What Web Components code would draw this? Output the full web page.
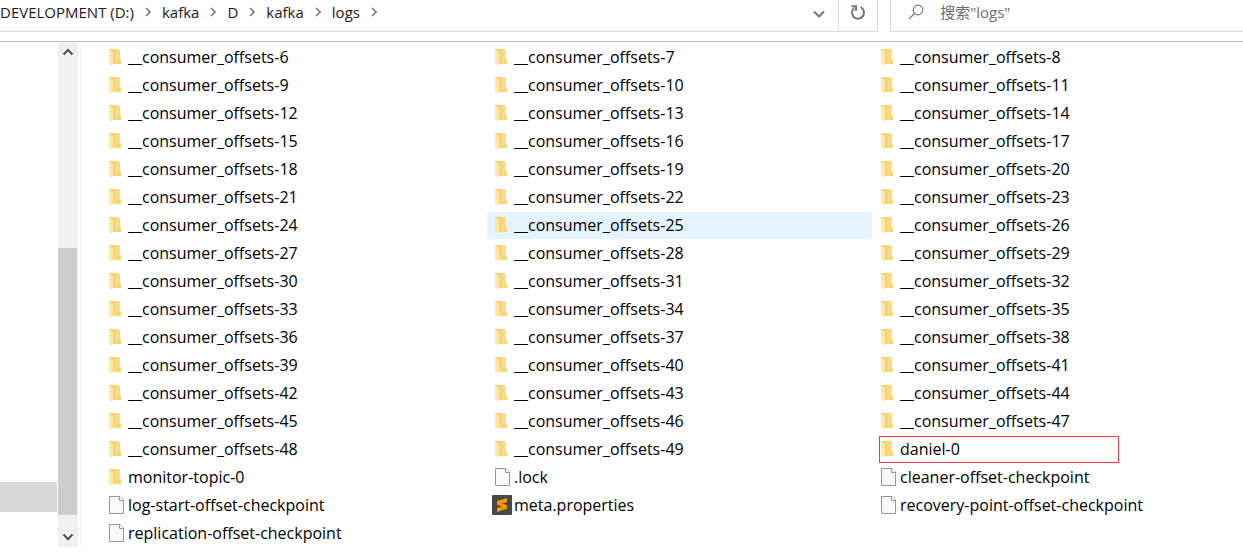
<!DOCTYPE html>
<html lang="zh-CN">
<head>
<meta charset="utf-8">
<title>logs</title>
<style>
  body { margin: 0; background: #fff; color: #000; font: 16px/26px "Open Sans", "Noto Sans CJK SC", sans-serif; }
</style>
</head>
<body>
<file-explorer></file-explorer>

<template id="explorer">
  <style>
    :host { display: block; }
    header { display: flex; gap: 12px; padding-bottom: 9px; border-bottom: 1px solid #bcbfbc; }
    address-bar { flex: 879 1 0; min-width: 0; }
    search-box { flex: 352 1 0; min-width: 0; }
    main { display: flex; }
    nav-pane { width: 58px; }
    scroll-track { width: 20px; }
    file-list { flex: 1; min-width: 0; margin-left: 2px; border-left: 1px solid #f3f3f3; }
  </style>
  <header>
    <address-bar></address-bar>
    <search-box></search-box>
  </header>
  <main>
    <nav-pane></nav-pane>
    <scroll-track></scroll-track>
    <file-list></file-list>
  </main>
</template>

<template id="address">
  <style>
    :host { display: flex; height: 32px; box-sizing: border-box; border-bottom: 1px solid #d9d9d9; font-size: 15px; }
    nav { flex: 1; display: flex; align-items: center; gap: 11px; padding-bottom: 8px; white-space: nowrap; min-width: 0; }
    a { color: #1a1a1a; text-decoration: none; }
    svg { display: block; fill: none; stroke: #777; }
    button { width: 38px; padding: 0 0 4px; border: 0; background: none; display: grid; place-items: center; }
    .refresh { width: 40px; padding-bottom: 6px; border: solid #d9d9d9; border-width: 0 1px; }
  </style>
  <nav aria-label="路径"></nav>
  <button aria-label="历史记录"><svg width="14" height="10" viewBox="0 0 14 10"><path d="M2 2.500l5 5 5-5" stroke-width="2"/></svg></button>
  <button class="refresh" aria-label="刷新"><svg width="16" height="17" viewBox="0 0 16 17"><path d="M10.500 3.200A6 6 0 1 1 4 4.200M1.500 2.200H6V7" stroke-width="2"/></svg></button>
</template>

<template id="search">
  <style>
    :host { display: flex; align-items: center; height: 32px; box-sizing: border-box; border: solid #d9d9d9; border-width: 0 0 1px 1px; }
    label { display: flex; align-items: center; flex: 1; gap: 16px; padding: 0 0 8px 17px; }
    svg { flex: none; display: block; fill: none; stroke: #777; }
    input { flex: 1; min-width: 0; border: 0; padding: 0; outline: 0; background: none; font: inherit; font-size: 15px; height: 25px; }
    input::placeholder { color: #6d6d6d; opacity: 1; }
  </style>
  <label><svg width="16" height="16" viewBox="0 0 16 16"><circle cx="10" cy="6" r="4.8" stroke-width="1.2"/><path d="M6.500 9.500L1 15" stroke-width="1.3"/></svg><input type="text" aria-label="搜索" placeholder='搜索"logs"'></label>
</template>

<template id="navpane">
  <style>
    :host { display: flex; flex-direction: column; justify-content: flex-end; padding-bottom: 35px; box-sizing: border-box; }
    .selected { height: 30px; margin-right: 1px; background: #d9d9d9; }
  </style>
  <div class="selected"></div>
</template>

<template id="scroll">
  <style>
    :host { display: flex; flex-direction: column; background: #f0f0f0; }
    button { height: 20px; padding: 0; border: 0; background: none; display: grid; place-items: center; }
    svg { display: block; fill: none; stroke: #505050; stroke-width: 2; }
    .before { flex: 186; }
    .thumb { flex: 267; margin-right: 1px; background: #cdcdcd; }
    .after { flex: 12; }
  </style>
  <button aria-label="向上"><svg width="12" height="8" viewBox="0 0 12 8"><path d="M1.500 6.500L6 2l4.500 4.500"/></svg></button>
  <div class="before"></div><div class="thumb"></div><div class="after"></div>
  <button aria-label="向下"><svg width="12" height="8" viewBox="0 0 12 8"><path d="M1.500 1.500L6 6l4.500-4.500"/></svg></button>
</template>

<template id="list">
  <style>
    :host { display: block; }
    div { display: grid; grid-template-columns: 77fr 77fr 74fr; gap: 1px; padding: 2px 0 0 20px; }
  </style>
  <div role="list"></div>
</template>

<template id="item">
  <style>
    :host { display: block; position: relative; min-width: 0; }
    :host([hovered]) { background: #e5f3ff; }
    :host([marked])::after { content: ""; position: absolute; left: 6px; top: 0; width: 240px; height: 27px; box-sizing: border-box; border: 1px solid #ee3a3f; pointer-events: none; }
    a { display: flex; align-items: center; height: 26px; padding-bottom: 1px; color: #000; text-decoration: none; white-space: nowrap; }
    .icon { flex: none; width: 22px; padding-left: 5px; }
    svg { display: block; }
  </style>
  <a href="#"><span class="icon"></span><slot></slot></a>
</template>

<script>
  const icons = {
    folder: `<svg width="20" height="20" viewBox="0 0 20 20"><defs><linearGradient id="g"><stop stop-color="#f0ca68"/><stop offset="1" stop-color="#ffe08a"/></linearGradient></defs><path d="M3 2h11v10l1 1v4H4z" fill="url(#g)"/><path d="M12.500 12.500h2.500V17h-2.500z" fill="#f5d36f"/><path d="M3 2.300L7 5v12l-1 2-3-2z" fill="#ffe9a8"/></svg>`,
    file: `<svg width="20" height="20" viewBox="0 0 20 20"><path d="M3.500 1.500h10.500l3.500 3.500v13.500h-14z" fill="#f8f9fa" stroke="#949494"/><path d="M13.500 1.500v4h4" fill="#fff" stroke="#949494"/></svg>`,
    sublime: `<svg width="20" height="20" viewBox="0 0 20 20"><rect width="20" height="20" rx="1" fill="#484848"/><path d="M15 3v4l-5 1.600 5 1.600v3.600L5 17v-4l5-1.600-5-1.600V6z" fill="#ff9800"/></svg>`
  };

  class Part extends HTMLElement {
    constructor() {
      super();
      this.attachShadow({ mode: "open" }).append(document.getElementById(this.constructor.template).content.cloneNode(true));
    }
  }

  customElements.define("file-item", class extends Part {
    static template = "item";
    connectedCallback() {
      this.shadowRoot.querySelector(".icon").innerHTML = icons[this.getAttribute("kind")];
    }
  });

  customElements.define("file-list", class extends Part {
    static template = "list";
    connectedCallback() {
      const grid = this.shadowRoot.querySelector("div");
      const add = (name, kind) => {
        const item = document.createElement("file-item");
        item.setAttribute("kind", kind);
        item.setAttribute("role", "listitem");
        item.textContent = name;
        item.toggleAttribute("hovered", name === "__consumer_offsets-25");
        item.toggleAttribute("marked", name === "daniel-0");
        grid.append(item);
      };
      for (let n = 6; n <= 49; n++) add(`__consumer_offsets-${n}`, "folder");
      add("daniel-0", "folder");
      add("monitor-topic-0", "folder");
      add(".lock", "file");
      add("cleaner-offset-checkpoint", "file");
      add("log-start-offset-checkpoint", "file");
      add("meta.properties", "sublime");
      add("recovery-point-offset-checkpoint", "file");
      add("replication-offset-checkpoint", "file");
    }
  });

  customElements.define("address-bar", class extends Part {
    static template = "address";
    connectedCallback() {
      this.shadowRoot.querySelector("nav").innerHTML = ["DEVELOPMENT (D:)", "kafka", "D", "kafka", "logs"]
        .map(name => `<a href="#">${name}</a><svg width="6" height="10" viewBox="0 0 6 10"><path d="M1 1l4 4-4 4" stroke-width="1.600"/></svg>`).join("");
    }
  });

  customElements.define("search-box", class extends Part { static template = "search"; });
  customElements.define("nav-pane", class extends Part { static template = "navpane"; });
  customElements.define("scroll-track", class extends Part { static template = "scroll"; });
  customElements.define("file-explorer", class extends Part { static template = "explorer"; });
</script>
</body>
</html>
